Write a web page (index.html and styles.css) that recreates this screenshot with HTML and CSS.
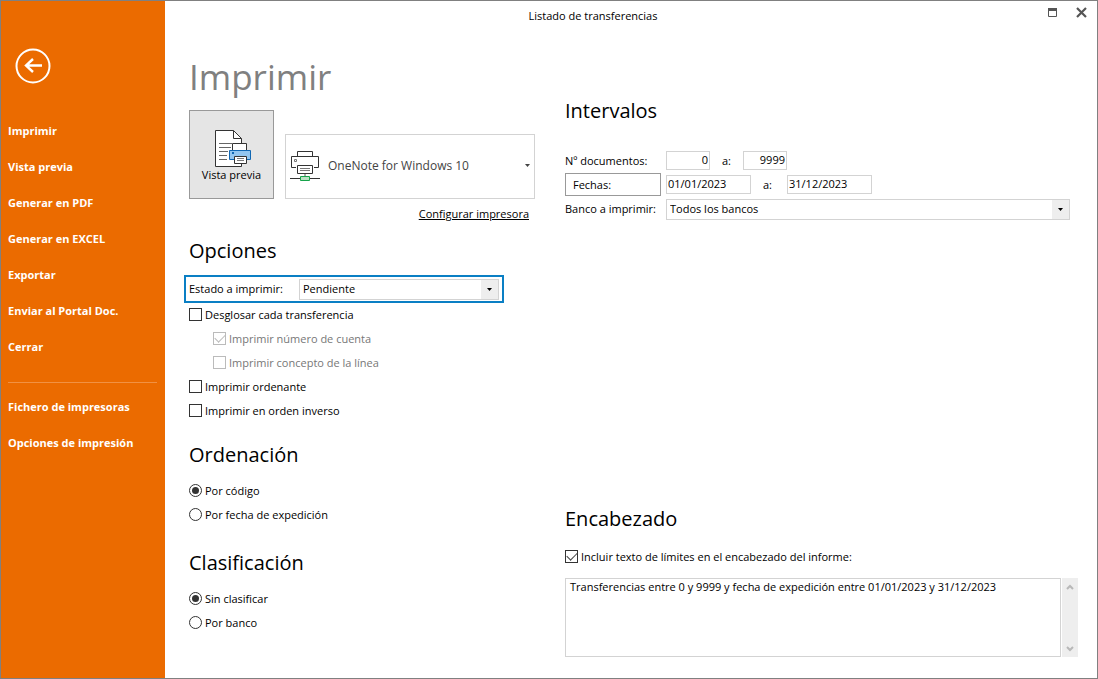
FILE: index.html
```html
<!DOCTYPE html>
<html lang="es">
<head>
<meta charset="utf-8">
<title>Listado de transferencias</title>
<link rel="stylesheet" href="styles.css">
</head>
<body>
<div class="window">
  <nav class="sidebar" aria-label="Acciones">
    <button class="back" type="button" aria-label="Volver">
      <svg width="36" height="36" viewBox="0 0 36 36" fill="none" stroke="#fff">
        <circle cx="18" cy="18" r="16.5" stroke-width="2"/>
        <path d="M27 17.500H11M18 11L11 17.500l7 6.500" stroke-width="2.400"/>
      </svg>
    </button>
    <ul class="menu">
      <li><a href="#">Imprimir</a></li>
      <li><a href="#">Vista previa</a></li>
      <li><a href="#">Generar en PDF</a></li>
      <li><a href="#">Generar en EXCEL</a></li>
      <li><a href="#">Exportar</a></li>
      <li><a href="#">Enviar al Portal Doc.</a></li>
      <li><a href="#">Cerrar</a></li>
    </ul>
    <ul class="menu menu-extra">
      <li><a href="#">Fichero de impresoras</a></li>
      <li><a href="#">Opciones de impresión</a></li>
    </ul>
  </nav>

  <div class="body">
    <header class="titlebar">
      <span class="title">Listado de transferencias</span>
      <div class="controls">
        <button type="button" aria-label="Maximizar">
          <svg width="11" height="11" viewBox="0 0 11 11"><path d="M1.500 1.500h8v8h-8z" fill="none" stroke="#555"/><path d="M1 1h9v3H1z" fill="#555"/></svg>
        </button>
        <button type="button" aria-label="Cerrar ventana">
          <svg width="11" height="11" viewBox="0 0 11 11"><path d="M1 1l9 9M10 1l-9 9" stroke="#555" stroke-width="2.200"/></svg>
        </button>
      </div>
    </header>

    <main class="content">
      <div class="column">
        <h1>Imprimir</h1>
        <div class="printer-row">
          <button class="preview" type="button">
            <svg width="37" height="39" viewBox="0 0 37 39">
              <path d="M1.500 1.500h18l8 8v28h-26z" fill="#fff" stroke="#333"/>
              <path d="M19.500 1.500v8h8" fill="none" stroke="#333"/>
              <path d="M5 14.500h13M5 18.500h12M5 22.500h9M5 26.500h8M5 30.500h8" stroke="#666"/>
              <path d="M18.500 14.500h14v7h-14z" fill="#fff" stroke="#333"/>
              <path d="M15.500 21.500h21v9h-21z" fill="#92c6f0" stroke="#1067b3"/>
              <path d="M18 23h2v2h-2z" fill="#1067b3"/>
              <path d="M20.500 27.500h12v7h-12z" fill="#fff" stroke="#333"/>
              <path d="M23 29.500h7M23 31.500h7" stroke="#777"/>
            </svg>
            <span>Vista previa</span>
          </button>
          <div class="printer">
            <svg width="30" height="32" viewBox="0 0 30 32">
              <path d="M7.500 7V1.500h15V7M6 17.500H1.500v-11h27v11H24" fill="none" stroke="#333"/>
              <path d="M4.500 9.500h2v2h-2z" fill="none" stroke="#777"/>
              <path d="M7.500 15.500h15v8h-15z" fill="#fff" stroke="#333"/>
              <path d="M10 18.500h10M10 20.500h10" stroke="#777"/>
              <path d="M15 24v2" stroke="#aaa" stroke-width="2"/>
              <path d="M0 28.500h30" stroke="#333"/>
              <path d="M10.500 26.500h9v4h-9z" fill="#b9e0c3" stroke="#16a34a"/>
            </svg>
            <div class="select select-plain">
              <select aria-label="Impresora"><option>OneNote for Windows 10</option></select>
              <svg class="arrow" width="5" height="3" viewBox="0 0 5 3"><path d="M0 0h5L2.500 3z" fill="#444"/></svg>
            </div>
          </div>
        </div>
        <a class="configure" href="#">Configurar impresora</a>

        <section class="options">
          <h2>Opciones</h2>
          <div class="status">
            <label for="status">Estado a imprimir:</label>
            <div class="select">
              <select id="status"><option>Pendiente</option></select>
              <svg class="arrow" width="5" height="3" viewBox="0 0 5 3"><path d="M0 0h5L2.500 3z" fill="#000"/></svg>
            </div>
          </div>
          <label class="choice"><input type="checkbox">Desglosar cada transferencia</label>
          <label class="choice nested"><input type="checkbox" checked disabled>Imprimir número de cuenta</label>
          <label class="choice nested"><input type="checkbox" disabled>Imprimir concepto de la línea</label>
          <label class="choice"><input type="checkbox">Imprimir ordenante</label>
          <label class="choice"><input type="checkbox">Imprimir en orden inverso</label>
        </section>

        <section class="group">
          <h2>Ordenación</h2>
          <label class="choice"><input type="radio" name="order" checked>Por código</label>
          <label class="choice"><input type="radio" name="order">Por fecha de expedición</label>
        </section>

        <section class="group">
          <h2>Clasificación</h2>
          <label class="choice"><input type="radio" name="class" checked>Sin clasificar</label>
          <label class="choice"><input type="radio" name="class">Por banco</label>
        </section>
      </div>

      <div class="column column-right">
        <section>
          <h2>Intervalos</h2>
          <div class="ranges">
            <label for="doc-from">Nº documentos:</label>
            <div class="range">
              <input class="number" id="doc-from" type="text" value="0">
              <label for="doc-to">a:</label>
              <input class="number" id="doc-to" type="text" value="9999">
            </div>
            <button class="dates" type="button">Fechas:</button>
            <div class="range">
              <input class="date" type="text" value="01/01/2023" aria-label="Fecha inicial">
              <label for="date-to">a:</label>
              <input class="date" id="date-to" type="text" value="31/12/2023">
            </div>
            <label for="bank">Banco a imprimir:</label>
            <div class="select">
              <select id="bank"><option>Todos los bancos</option></select>
              <svg class="arrow" width="5" height="3" viewBox="0 0 5 3"><path d="M0 0h5L2.500 3z" fill="#000"/></svg>
            </div>
          </div>
        </section>

        <section class="heading-text">
          <h2>Encabezado</h2>
          <label class="choice"><input type="checkbox" checked>Incluir texto de límites en el encabezado del informe:</label>
          <div class="memo">
            <textarea aria-label="Texto del encabezado">Transferencias entre 0 y 9999 y fecha de expedición entre 01/01/2023 y 31/12/2023</textarea>
            <div class="scroll">
              <svg width="8" height="6" viewBox="0 0 8 6"><path d="M1 5l3-3 3 3" fill="none" stroke="#b8b8b8" stroke-width="2"/></svg>
              <svg width="8" height="6" viewBox="0 0 8 6"><path d="M1 1l3 3 3-3" fill="none" stroke="#b8b8b8" stroke-width="2"/></svg>
            </div>
          </div>
        </section>
      </div>
    </main>
  </div>
</div>
</body>
</html>
```
FILE: styles.css
```css
* {
  box-sizing: border-box;
}

body {
  margin: 0;
  background: #fff;
  color: #000;
  font: 11px/16px "Open Sans", "Noto Sans", sans-serif;
}

button,
input,
select,
textarea {
  margin: 0;
  color: inherit;
  font: inherit;
}

h1,
h2 {
  margin: 0;
  font-weight: 400;
}

h1 {
  margin-bottom: 9px;
  color: #808080;
  font-size: 35px;
  line-height: 48px;
}

h2 {
  margin-bottom: 10px;
  font-size: 20px;
  line-height: 28px;
}

.window {
  display: grid;
  grid-template-columns: 164px 1fr;
  min-height: 100vh;
  border: 1px solid #808080;
}

/* Sidebar */

.sidebar {
  padding: 47px 8px 0 7px;
  background: #eb6b00;
}

.back {
  display: block;
  margin: 0 0 29px 7px;
  padding: 0;
  border: 0;
  background: none;
}

.back svg,
.controls svg,
.preview svg {
  display: block;
}

.menu {
  margin: 0;
  padding: 0;
  list-style: none;
}

.menu a {
  display: block;
  color: #fff;
  font-size: 11px;
  font-weight: 700;
  line-height: 36px;
  text-decoration: none;
}

.menu-extra {
  margin-top: 17px;
  padding-top: 6px;
  border-top: 1px solid #f19143;
}

/* Window body */

.body {
  display: flex;
  flex-direction: column;
}

.titlebar {
  display: grid;
  grid-template-columns: 1fr auto 1fr;
  height: 32px;
  padding: 0 10px;
}

.title {
  grid-column: 1 / -1;
  grid-row: 1;
  padding: 7px 76px 0 0;
  text-align: center;
}

.controls {
  display: flex;
  grid-column: 3;
  grid-row: 1;
  gap: 18px;
  justify-self: end;
  padding-top: 6px;
}

.controls button {
  height: 11px;
  padding: 0;
  border: 0;
  background: none;
}

.content {
  display: grid;
  flex: 1;
  grid-template-columns: 346px 1fr;
  gap: 30px;
  padding: 0 19px 21px 24px;
}

.column {
  display: flex;
  flex-direction: column;
  padding-top: 20px;
}

.column-right {
  justify-content: space-between;
  padding-top: 64px;
}

/* Printer */

.printer-row {
  display: flex;
  align-items: flex-end;
  gap: 11px;
}

.preview {
  display: flex;
  flex-direction: column;
  align-items: center;
  width: 85px;
  height: 89px;
  padding: 18px 0 0;
  border: 1px solid #999;
  background: #e5e5e5;
}

.preview svg {
  margin-left: 2px;
}

.preview span {
  line-height: 14px;
}

.printer {
  display: flex;
  flex: 1;
  align-items: center;
  height: 65px;
  padding: 0 0 2px 4px;
  border: 1px solid #d3d3d3;
}

.configure {
  align-self: flex-end;
  margin: 5px 6px 0 0;
  color: inherit;
  line-height: 20px;
}

/* Form controls */

.select {
  display: grid;
  grid-template-columns: 1fr 17px;
  align-items: center;
  height: 21px;
  border: 1px solid #d3d3d3;
  background: linear-gradient(#eee, #eee) right / 17px 100% no-repeat;
}

.select select {
  grid-column: 1 / -1;
  grid-row: 1;
  height: 19px;
  padding: 0 20px 0 3px;
  border: 0;
  background: none;
  appearance: none;
}

.arrow {
  grid-column: 2;
  grid-row: 1;
  justify-self: center;
  pointer-events: none;
}

.select-plain {
  flex: 1;
  grid-template-columns: 1fr 14px;
  border: 0;
  background: none;
  color: #444;
  font-size: 12px;
}

.select-plain select {
  padding-left: 8px;
}

.status {
  display: grid;
  grid-template-columns: 110px 1fr;
  align-items: center;
  width: 320px;
  height: 28px;
  margin-left: -5px;
  padding: 0 3px;
  border: 2px solid #0a7fc4;
}

.choice {
  display: flex;
  align-items: center;
  gap: 3px;
  height: 24px;
}

.choice input {
  display: grid;
  place-items: center;
  width: 13px;
  height: 13px;
  margin-bottom: 2px;
  border: 1px solid #333;
  background: #fff;
  appearance: none;
}

.choice input[type="radio"] {
  border-radius: 50%;
}

.choice input[type="radio"]:checked::before {
  width: 7px;
  height: 7px;
  border-radius: 50%;
  background: #333;
  content: "";
}

.choice input[type="checkbox"]:checked::before {
  width: 9px;
  height: 5px;
  margin-bottom: 3px;
  border: solid #444;
  border-width: 0 0 1px 1px;
  transform: rotate(-45deg);
  content: "";
}

.nested {
  padding-left: 24px;
  color: #777;
}

.nested input,
.nested input[type="checkbox"]:checked::before {
  border-color: #bbb;
}

.options {
  margin-top: 13px;
}

.group {
  margin-top: 18px;
}

.group + .group {
  margin-top: 22px;
}

/* Ranges */

.ranges {
  display: grid;
  grid-template-columns: 96px 1fr;
  grid-auto-rows: 24px;
  align-items: center;
  column-gap: 5px;
  margin: 24px 8px 0 0;
}

.range {
  display: flex;
  align-items: center;
}

.range label {
  width: 33px;
  padding-left: 12px;
}

.range .date + label {
  width: 36px;
}

.number,
.date {
  width: 44px;
  height: 19px;
  margin-bottom: 2px;
  padding: 0 4px 1px 1px;
  border: 1px solid #d3d3d3;
}

.number {
  padding-right: 1px;
  text-align: right;
}

.date {
  width: 85px;
}

.dates {
  align-self: start;
  height: 23px;
  padding: 0 7px;
  border: 1px solid #999;
  background: #fff;
  text-align: left;
}

/* Report heading */

.heading-text .choice {
  margin-top: 12px;
}

.memo {
  display: grid;
  grid-template-columns: 1fr 16px;
  gap: 1px;
  height: 79px;
  margin-top: 9px;
}

.memo textarea {
  padding: 0 4px;
  border: 1px solid #d3d3d3;
  resize: none;
}

.scroll {
  display: flex;
  flex-direction: column;
  align-items: center;
  justify-content: space-between;
  padding: 6px 0 5px;
  background: #eee;
}
```
